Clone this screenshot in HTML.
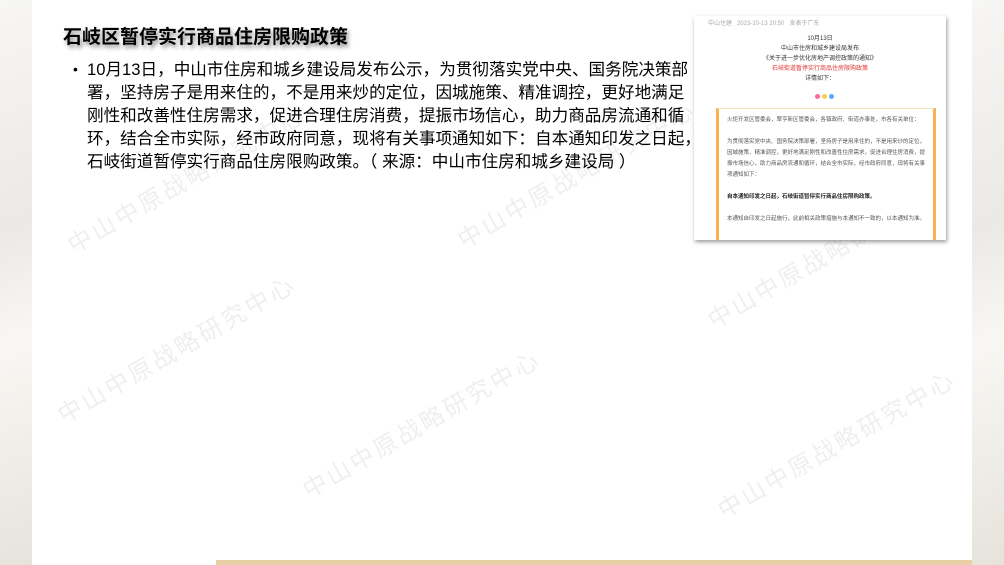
<!DOCTYPE html><html><head><meta charset="utf-8"><style>
body{margin:0;width:1004px;height:565px;overflow:hidden;background:#f1f0ee;font-family:"Liberation Sans","Noto Sans CJK SC",sans-serif;position:relative}
.side{position:absolute;top:0;height:565px;background:linear-gradient(160deg,#f7f6f4,#ebe9e5 40%,#f8f7f3 60%,#e6e3dc)}
.panel{position:absolute;left:32px;top:0;width:940px;height:565px;background:#fff}
.bar{position:absolute;left:216px;top:560px;width:756px;height:5px;background:#e8cfa5}
h1{position:absolute;left:63px;top:22px;margin:0;font-size:19px;font-weight:bold;color:#000;text-shadow:2px 3px 4px rgba(0,0,0,.45)}
.body{position:absolute;left:87px;top:58px;width:640px;font-size:16.6px;line-height:23px;color:#000;white-space:nowrap}
.dot{position:absolute;left:73px;top:58px;font-size:14px;line-height:23px}
.wm{position:absolute;font-size:24px;color:#efefef;transform:rotate(-30deg);transform-origin:left top;white-space:nowrap;letter-spacing:3px}
.shot{position:absolute;left:694px;top:16px;width:252px;height:224px;background:#fff;box-shadow:1px 2px 4px rgba(0,0,0,.4);font-size:6px;color:#555;text-align:center;overflow:hidden}
.inner{position:absolute;left:22px;top:92px;width:220px;height:140px;border:1px solid #f3e6b8;text-align:left;padding:6px 8px;box-sizing:border-box;line-height:11px;font-size:5.5px;white-space:normal}
</style></head><body>
<div class="side" style="left:0;width:32px"></div>
<div class="side" style="left:972px;width:32px"></div>
<div class="panel"></div>
<div class="wm" style="left:60px;top:230px">中山中原战略研究中心</div>
<div class="wm" style="left:450px;top:225px">中山中原战略研究中心</div>
<div class="wm" style="left:50px;top:400px">中山中原战略研究中心</div>
<div class="wm" style="left:295px;top:475px">中山中原战略研究中心</div>
<div class="wm" style="left:700px;top:305px">中山中原战略研究中心</div>
<div class="wm" style="left:710px;top:495px">中山中原战略研究中心</div>
<div class="bar"></div>
<h1>石岐区暂停实行商品住房限购政策</h1>
<div class="dot">•</div>
<div class="body">10月13日，中山市住房和城乡建设局发布公示，为贯彻落实党中央、国务院决策部<br>署，坚持房子是用来住的，不是用来炒的定位，因城施策、精准调控，更好地满足<br>刚性和改善性住房需求，促进合理住房消费，提振市场信心，助力商品房流通和循<br>环，结合全市实际，经市政府同意，现将有关事项通知如下：自本通知印发之日起，<br>石岐街道暂停实行商品住房限购政策。（ 来源：中山市住房和城乡建设局 ）</div>
<div class="shot">
<div style="position:absolute;left:14px;top:2px;color:#aaa">中山住建 &nbsp; 2023-10-13 20:50 &nbsp; 发表于广东</div>
<div style="position:absolute;left:0;right:0;top:18px;line-height:10px;color:#333">10月13日<br>中山市住房和城乡建设局发布<br>《关于进一步优化房地产调控政策的通知》<br><span style="color:#d33">石岐街道暂停实行商品住房限购政策</span><br>详情如下：</div>
<div style="position:absolute;left:121px;top:78px;width:5px;height:5px;border-radius:50%;background:#f69;box-shadow:7px 0 #fc4,14px 0 #5af"></div>
<div class="inner" style="border-left:3px solid #f7b255;border-right:3px solid #f7b255">火炬开发区管委会，翠亨新区管委会，各镇政府、街道办事处，市各有关单位：<br><br>为贯彻落实党中央、国务院决策部署，坚持房子是用来住的，不是用来炒的定位，因城施策、精准调控，更好地满足刚性和改善性住房需求，促进合理住房消费，提振市场信心，助力商品房流通和循环，结合全市实际，经市政府同意，现将有关事项通知如下：<br><br><b style="color:#222">自本通知印发之日起，石岐街道暂停实行商品住房限购政策。</b><br><br>本通知自印发之日起施行，此前相关政策措施与本通知不一致的，以本通知为准。</div>
</div>
</body></html>
